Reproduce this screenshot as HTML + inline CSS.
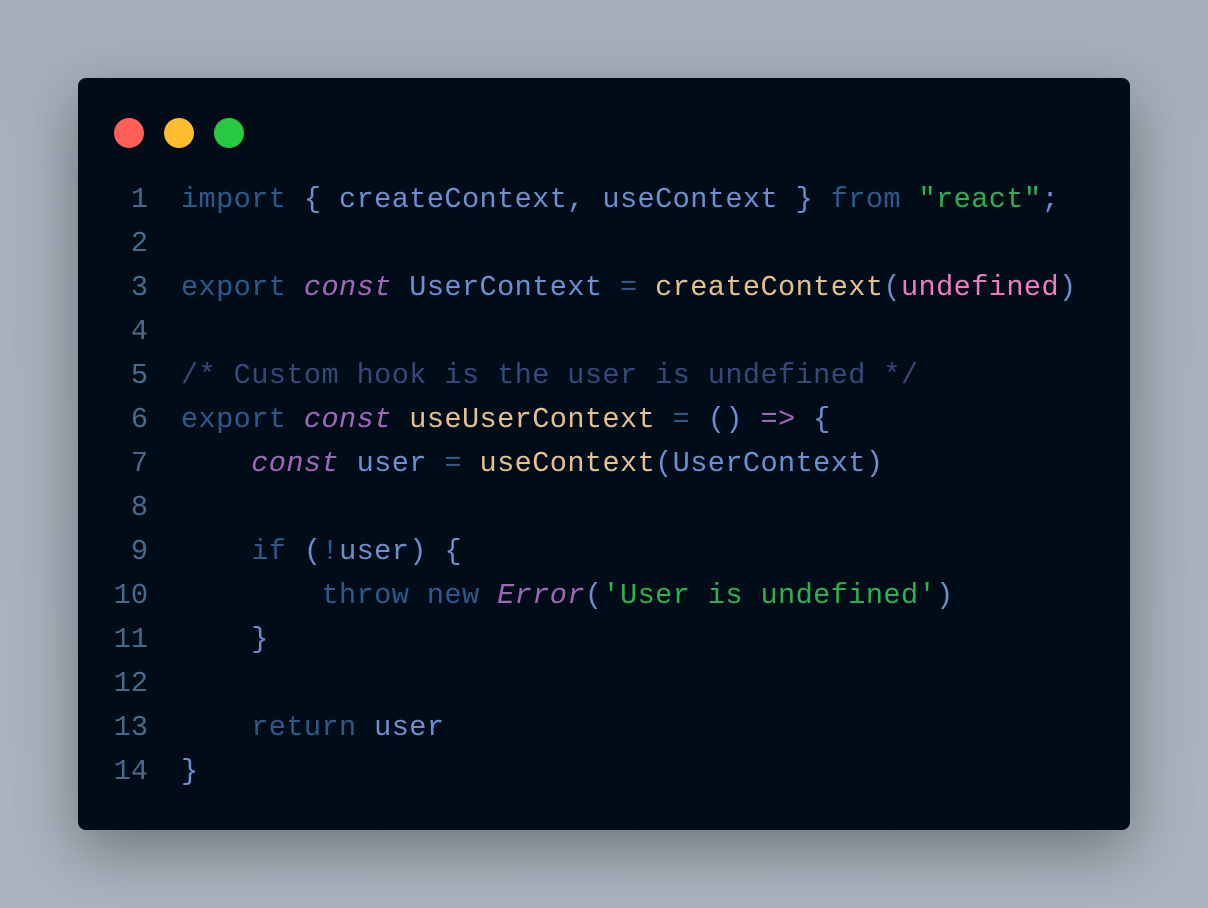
<!DOCTYPE html>
<html><head><style>
html,body{margin:0;padding:0}
body{width:1208px;height:908px;background:linear-gradient(180deg,#a6b0ba 0%,#aab4be 100%);position:relative;overflow:hidden;font-family:"Liberation Mono","DejaVu Sans Mono",monospace}
.card{position:absolute;left:78px;top:78px;width:1052px;height:752px;background:#000d19;border-radius:8px;box-shadow:0 20px 60px rgba(0,0,0,0.35)}
.dot{position:absolute;top:118px;width:30px;height:30px;border-radius:50%}
.code{position:absolute;left:0;top:178px;font-size:28.6px;line-height:44px;white-space:pre;color:#6b8fd0;letter-spacing:0.4px}
.ln{display:inline-block;width:148px;text-align:right;color:#4a6a8c;letter-spacing:0}
.k{color:#2c5a8c}.c{color:#a066b8;font-style:italic}.f{color:#e3c08e}.u{color:#f07ac0}.s{color:#2fb04f}.cm{color:#34497a}
.gap{display:inline-block;width:33px}
</style></head><body>
<div class="card"></div>
<div class="dot" style="left:114px;background:#ff5f57"></div>
<div class="dot" style="left:164px;background:#febc2e"></div>
<div class="dot" style="left:214px;background:#28c840"></div>
<div class="code"><span class="ln">1</span><span class="gap"></span><span class="k">import</span> { createContext, useContext } <span class="k">from</span> <span class="s">"react"</span>;
<span class="ln">2</span>
<span class="ln">3</span><span class="gap"></span><span class="k">export</span> <span class="c">const</span> UserContext <span class="k">=</span> <span class="f">createContext</span>(<span class="u">undefined</span>)
<span class="ln">4</span>
<span class="ln">5</span><span class="gap"></span><span class="cm">/* Custom hook is the user is undefined */</span>
<span class="ln">6</span><span class="gap"></span><span class="k">export</span> <span class="c">const</span> <span class="f">useUserContext</span> <span class="k">=</span> () <span class="c">=&gt;</span> {
<span class="ln">7</span><span class="gap"></span>    <span class="c">const</span> user <span class="k">=</span> <span class="f">useContext</span>(UserContext)
<span class="ln">8</span>
<span class="ln">9</span><span class="gap"></span>    <span class="k">if</span> (<span class="k">!</span>user) {
<span class="ln">10</span><span class="gap"></span>        <span class="k">throw</span> <span class="k">new</span> <span class="c">Error</span>(<span class="s">'User is undefined'</span>)
<span class="ln">11</span><span class="gap"></span>    }
<span class="ln">12</span>
<span class="ln">13</span><span class="gap"></span>    <span class="k">return</span> user
<span class="ln">14</span><span class="gap"></span>}</div>
</body></html>
